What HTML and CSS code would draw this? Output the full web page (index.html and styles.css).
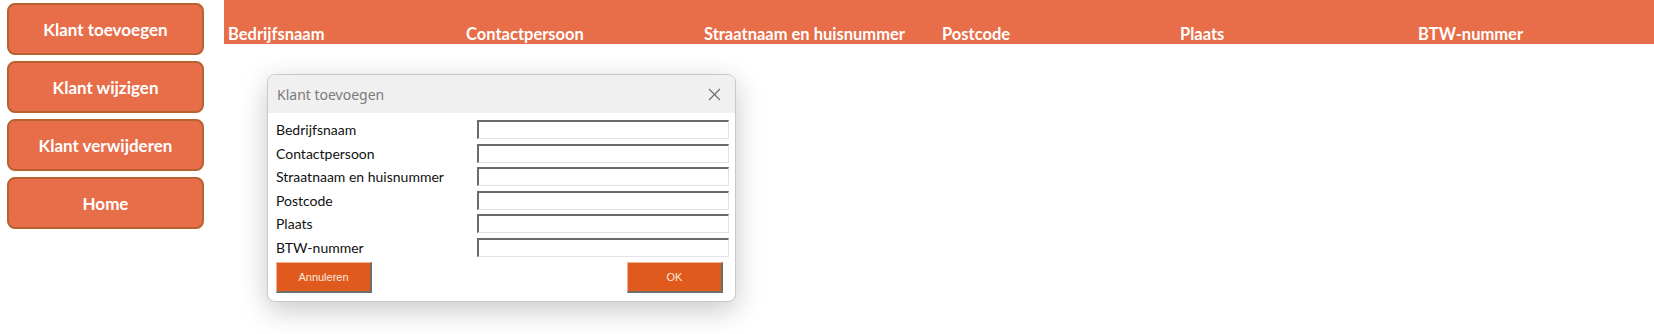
FILE: index.html
```html
<!DOCTYPE html>
<html lang="nl">
<head>
    <meta charset="UTF-8">
    <title>Klanten</title>
    <link rel="stylesheet" href="styles.css">
</head>
<body>
    <div class="page">
        <div class="sidebar">
            <div class="nav-btn">Klant toevoegen</div>
            <div class="nav-btn">Klant wijzigen</div>
            <div class="nav-btn">Klant verwijderen</div>
            <div class="nav-btn">Home</div>
        </div>
        <div class="sheet">
            <div class="sheet-header">
                <div class="col">Bedrijfsnaam</div>
                <div class="col">Contactpersoon</div>
                <div class="col">Straatnaam en huisnummer</div>
                <div class="col">Postcode</div>
                <div class="col">Plaats</div>
                <div class="col">BTW-nummer</div>
            </div>

            <div class="dialog">
                <div class="dialog-title">
                    <span>Klant toevoegen</span>
                    <svg class="close" width="13" height="13" viewBox="0 0 13 13">
                        <path d="M1 1 L12 12 M12 1 L1 12" stroke="#6b6b6b" stroke-width="1.1" fill="none"/>
                    </svg>
                </div>
                <div class="dialog-body">
                    <div class="field"><label>Bedrijfsnaam</label><div class="input"></div></div>
                    <div class="field"><label>Contactpersoon</label><div class="input"></div></div>
                    <div class="field"><label>Straatnaam en huisnummer</label><div class="input"></div></div>
                    <div class="field"><label>Postcode</label><div class="input"></div></div>
                    <div class="field"><label>Plaats</label><div class="input"></div></div>
                    <div class="field"><label>BTW-nummer</label><div class="input"></div></div>
                    <div class="actions">
                        <div class="btn">Annuleren</div>
                        <div class="btn">OK</div>
                    </div>
                </div>
            </div>
        </div>
    </div>
</body>
</html>
```

FILE: styles.css
```css
body {
    margin: 0;
    background-color: #ffffff;
    font-family: 'Lato', 'Liberation Sans', sans-serif;
}
.page {
    display: flex;
    height: 334px;
    overflow: hidden;
}
.sidebar {
    width: 217px;
    padding: 3px 0 0 7px;
    display: flex;
    flex-direction: column;
    gap: 6px;
}
.nav-btn {
    width: 193px;
    height: 48px;
    background-color: #e86d49;
    border: 2px solid #b8622f;
    border-radius: 8px;
    color: #ffffff;
    font-weight: bold;
    font-size: 17px;
    display: flex;
    align-items: center;
    justify-content: center;
}
.sheet {
    flex: 1;
}
.sheet-header {
    height: 44px;
    background-color: #e86d49;
    display: flex;
    align-items: flex-end;
}
.sheet-header .col {
    width: 238px;
    flex-shrink: 0;
    padding: 0 0 0 4px;
    box-sizing: border-box;
    line-height: 20px;
    color: #ffffff;
    font-weight: bold;
    font-size: 16.5px;
}
.dialog {
    margin: 30px 0 0 43px;
    width: 467px;
    border: 1px solid #c9c9c9;
    border-radius: 8px;
    overflow: hidden;
    background-color: #ffffff;
    box-shadow: 0 8px 28px rgba(0, 0, 0, 0.22);
}
.dialog-title {
    height: 38px;
    background-color: #f0f0f0;
    display: flex;
    align-items: center;
    justify-content: space-between;
    padding: 0 14px 0 9px;
    color: #7a7a7a;
    font-family: 'Noto Sans', sans-serif;
    font-size: 14px;
}
.dialog-body {
    padding: 5px 6px 8px 8px;
}
.field {
    display: flex;
    align-items: center;
    justify-content: space-between;
    height: 23.5px;
}
.field label {
    font-size: 14px;
    color: #111111;
}
.input {
    width: 249px;
    height: 16px;
    border-top: 2px solid #6a6a6a;
    border-left: 2px solid #6a6a6a;
    border-right: 1px solid #e2e2e2;
    border-bottom: 1px solid #e2e2e2;
    background-color: #ffffff;
}
.actions {
    display: flex;
    justify-content: space-between;
    margin-top: 3px;
    padding-right: 6px;
}
.btn {
    width: 93px;
    height: 28px;
    background-color: #e05a1e;
    border-top: 1px solid #f2b08f;
    border-left: 1px solid #f2b08f;
    border-right: 2px solid #6e6e6e;
    border-bottom: 2px solid #6e6e6e;
    color: #fbe9df;
    font-family: 'Liberation Sans', sans-serif;
    font-size: 11px;
    display: flex;
    align-items: center;
    justify-content: center;
}
```
